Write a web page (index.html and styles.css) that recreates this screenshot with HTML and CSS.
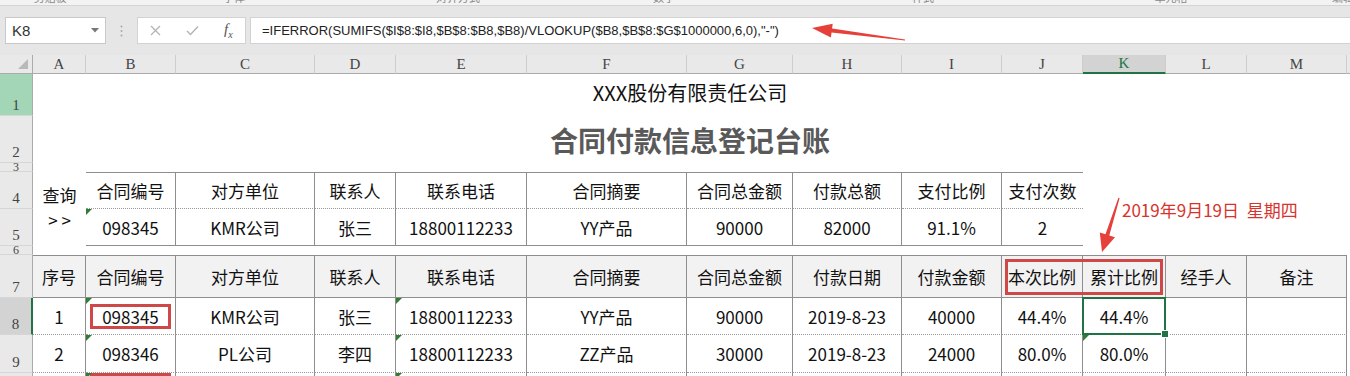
FILE: index.html
```html
<!DOCTYPE html>
<html lang="zh-CN">
<head>
    <meta charset="UTF-8">
    <title>合同付款信息登记台账</title>
    <link rel="stylesheet" href="styles.css">
</head>
<body>
    <div class="ribbon">
        <span>剪贴板</span><span>字体</span><span>对齐方式</span><span>数字</span><span>样式</span><span>单元格</span><span>编辑</span>
    </div>

    <div class="formula-bar">
        <div class="name-box">
            <span>K8</span>
            <svg width="8" height="5" viewBox="0 0 8 5"><path d="M0 0H8L4 4.5Z" fill="#777"/></svg>
        </div>
        <div class="fb-dots">
            <svg width="3" height="12" viewBox="0 0 3 12"><circle cx="1.5" cy="1.5" r="1" fill="#aaa"/><circle cx="1.5" cy="6" r="1" fill="#aaa"/><circle cx="1.5" cy="10.5" r="1" fill="#aaa"/></svg>
        </div>
        <div class="fb-buttons">
            <svg width="11" height="11" viewBox="0 0 11 11"><path d="M1 1L10 10M10 1L1 10" stroke="#b4b4b4" stroke-width="1.3"/></svg>
            <svg width="13" height="11" viewBox="0 0 13 11"><path d="M1 6L4.5 9.5L12 1.5" stroke="#b4b4b4" stroke-width="1.4" fill="none"/></svg>
            <span class="fx"><i>f</i><sub>x</sub></span>
        </div>
        <div class="fb-input">=IFERROR(SUMIFS($I$8:$I8,$B$8:$B8,$B8)/VLOOKUP($B8,$B$8:$G$1000000,6,0),"-")</div>
    </div>

    <div class="sheet">
        <!-- column headers -->
        <div class="corner"></div>
        <div class="ch">A</div><div class="ch">B</div><div class="ch">C</div><div class="ch">D</div>
        <div class="ch">E</div><div class="ch">F</div><div class="ch">G</div><div class="ch">H</div>
        <div class="ch">I</div><div class="ch">J</div><div class="ch sel">K</div><div class="ch">L</div>
        <div class="ch">M</div><div class="ch end"></div>

        <!-- row 1, 2 -->
        <div class="rh hl">1</div>
        <div class="c company span13">XXX股份有限责任公司</div>
        <div class="c"></div>
        <div class="rh">2</div>
        <div class="c title span13">合同付款信息登记台账</div>
        <div class="c"></div>

        <div class="rh thin">3</div>
        <div class="c span14"></div>

        <!-- query block -->
        <div class="rh">4</div>
        <div class="c ask"><span>查询</span><span>&gt; &gt;</span></div>
        <div class="c q qh">合同编号</div>
        <div class="c q qh">对方单位</div>
        <div class="c q qh">联系人</div>
        <div class="c q qh">联系电话</div>
        <div class="c q qh">合同摘要</div>
        <div class="c q qh">合同总金额</div>
        <div class="c q qh">付款总额</div>
        <div class="c q qh">支付比例</div>
        <div class="c q qh last">支付次数</div>
        <div class="c span4"></div>

        <div class="rh">5</div>
        <div class="c q qd num">098345</div>
        <div class="c q qd">KMR公司</div>
        <div class="c q qd">张三</div>
        <div class="c q qd">18800112233</div>
        <div class="c q qd">YY产品</div>
        <div class="c q qd">90000</div>
        <div class="c q qd">82000</div>
        <div class="c q qd">91.1%</div>
        <div class="c q qd last">2</div>
        <div class="c span4"></div>

        <div class="rh thin">6</div>
        <div class="c span14"></div>

        <!-- register -->
        <div class="rh">7</div>
        <div class="c th">序号</div>
        <div class="c th">合同编号</div>
        <div class="c th">对方单位</div>
        <div class="c th">联系人</div>
        <div class="c th">联系电话</div>
        <div class="c th">合同摘要</div>
        <div class="c th">合同总金额</div>
        <div class="c th">付款日期</div>
        <div class="c th">付款金额</div>
        <div class="c th">本次比例<span class="redbox"></span></div>
        <div class="c th">累计比例</div>
        <div class="c th">经手人</div>
        <div class="c th">备注</div>
        <div class="c"></div>

        <div class="rh sel">8</div>
        <div class="c td">1</div>
        <div class="c td num"><span class="mark">098345</span></div>
        <div class="c td">KMR公司</div>
        <div class="c td">张三</div>
        <div class="c td num">18800112233</div>
        <div class="c td">YY产品</div>
        <div class="c td">90000</div>
        <div class="c td">2019-8-23</div>
        <div class="c td">40000</div>
        <div class="c td">44.4%</div>
        <div class="c td active">44.4%</div>
        <div class="c td"></div>
        <div class="c td"></div>
        <div class="c"></div>

        <div class="rh">9</div>
        <div class="c td">2</div>
        <div class="c td num">098346</div>
        <div class="c td">PL公司</div>
        <div class="c td">李四</div>
        <div class="c td num">18800112233</div>
        <div class="c td">ZZ产品</div>
        <div class="c td">30000</div>
        <div class="c td">2019-8-23</div>
        <div class="c td">24000</div>
        <div class="c td">80.0%</div>
        <div class="c td num">80.0%</div>
        <div class="c td"></div>
        <div class="c td"></div>
        <div class="c"></div>

        <div class="rh">10</div>
        <div class="c td">3</div>
        <div class="c td num top"><span class="mark">098347</span></div>
        <div class="c td"></div>
        <div class="c td"></div>
        <div class="c td num"></div>
        <div class="c td"></div>
        <div class="c td"></div>
        <div class="c td"></div>
        <div class="c td"></div>
        <div class="c td"></div>
        <div class="c td"></div>
        <div class="c td"></div>
        <div class="c td"></div>
        <div class="c"></div>
    </div>

    <!-- annotations drawn over the sheet -->
    <svg class="arrow-formula" width="110" height="30" viewBox="0 0 110 30">
        <polygon points="12,13 32.7,8.7 32.1,13.6 105,24.5 105,25.5 31.5,17.6 30.9,22.5" fill="#e5403a"/>
    </svg>
    <svg class="arrow-date" width="40" height="70" viewBox="0 0 40 70">
        <polygon points="12,62 9.8,42.4 15.5,44.2 28.4,7.8 29.6,8.2 19.3,45.4 25,47.2" fill="#e5403a"/>
    </svg>
    <div class="note">2019年9月19日&nbsp; 星期四</div>
</body>
</html>
```

FILE: styles.css
```css
* {
    box-sizing: border-box;
}

body {
    margin: 0;
    width: 1350px;
    height: 376px;
    overflow: hidden;
    position: relative;
    background-color: #e6e6e6;
    font-family: "Noto Sans CJK SC", sans-serif;
    color: #111;
}

/* ribbon bottom edge */
.ribbon {
    height: 6px;
    background-color: #f3f3f3;
    border-bottom: 1px solid #d4d4d4;
    display: grid;
    grid-template-columns: 100px 268px 180px 232px 286px 210px 134px;
    overflow: hidden;
}

.ribbon span {
    text-align: center;
    font-size: 11px;
    line-height: 11px;
    margin-top: -8px;
    color: #888;
}

/* formula bar */
.formula-bar {
    display: flex;
    height: 27px;
    margin-top: 11px;
    padding-left: 5px;
}

.name-box {
    width: 101px;
    background-color: #fff;
    border: 1px solid #c8c8c8;
    display: flex;
    align-items: center;
    justify-content: space-between;
    padding: 0 6px 0 6px;
    font-family: "Liberation Sans", sans-serif;
    font-size: 15px;
    color: #333;
}

.fb-dots {
    width: 31px;
    display: flex;
    align-items: center;
    justify-content: center;
}

.fb-buttons {
    width: 109px;
    background-color: #fff;
    border: 1px solid #d2d2d2;
    display: flex;
    align-items: center;
    justify-content: space-around;
}

.fx {
    font-family: "Liberation Serif", serif;
    font-size: 15px;
    color: #555;
}

.fx sub {
    font-size: 10px;
    font-style: italic;
}

.fb-input {
    flex: 1;
    margin-left: 4px;
    background-color: #fff;
    border: 1px solid #d2d2d2;
    border-right: none;
    padding-left: 11px;
    font-family: "Liberation Sans", sans-serif;
    font-size: 13px;
    line-height: 25px;
    color: #222;
    white-space: nowrap;
}

/* worksheet */
.sheet {
    margin-top: 11px;
    display: grid;
    grid-template-columns: 33px 53px 90px 139px 81px 131px 160px 106px 109px 100px 81px 83px 81px 100px 1fr;
    grid-template-rows: 19px 42px 47px 9px 37px 37px 9px 43px 37px 38px 30px;
    background-color: #fff;
}

.corner {
    background-color: #e9e9e9;
    border-right: 1px solid #ababab;
    border-bottom: 1px solid #ababab;
    position: relative;
}

.corner::after {
    content: "";
    position: absolute;
    right: 4px;
    bottom: 4px;
    border-left: 10px solid transparent;
    border-bottom: 10px solid #b9b9b9;
}

.ch {
    background-color: #e9e9e9;
    border-right: 1px solid #cdcdcd;
    border-bottom: 1px solid #ababab;
    display: flex;
    align-items: flex-end;
    justify-content: center;
    font-family: "Liberation Serif", serif;
    font-size: 15px;
    line-height: 17px;
    color: #444;
}

.ch.end {
    border-right: none;
}

.ch.sel {
    background-color: #d3d3d3;
    border-bottom: 2px solid #217346;
    color: #217346;
}

.rh {
    background-color: #e9e9e9;
    border-right: 1px solid #ababab;
    border-bottom: 1px solid #d6d6d6;
    display: flex;
    align-items: flex-end;
    justify-content: center;
    font-family: "Liberation Serif", serif;
    font-size: 15px;
    line-height: 15px;
    padding-bottom: 2px;
    color: #444;
    overflow: hidden;
}

.rh.thin {
    font-size: 12px;
    line-height: 8px;
    padding-bottom: 0;
}

.rh.hl {
    background-color: #a2d6b7;
}

.rh.sel {
    background-color: #d3d3d3;
    border-right: 2px solid #217346;
}

.c {
    display: flex;
    align-items: center;
    justify-content: center;
    font-size: 17px;
    white-space: nowrap;
    position: relative;
}

.span13 {
    grid-column: span 13;
}

.span14 {
    grid-column: span 14;
}

.span4 {
    grid-column: span 4;
}

.company {
    font-size: 20px;
    color: #111;
    padding-bottom: 5px;
}

.title {
    font-size: 28px;
    font-weight: bold;
    color: #595959;
}

.ask {
    grid-row: span 2;
    flex-direction: column;
    line-height: 25px;
    padding-bottom: 4px;
}

/* query block */
.q {
    border-right: 1px solid #8e8e8e;
}

.q.last {
    border-right: none;
}

.qh {
    border-top: 1px solid #8e8e8e;
    border-bottom: 1px dotted #9a9a9a;
}

.qd {
    border-bottom: 1px solid #8e8e8e;
}

/* register table */
.th {
    background-color: #f2f2f2;
    border-top: 1px solid #8e8e8e;
    border-bottom: 1px solid #8e8e8e;
    border-right: 1px solid #8e8e8e;
}

.td {
    border-bottom: 1px dotted #9a9a9a;
    border-right: 1px solid #8e8e8e;
}

.td.top {
    align-items: flex-start;
}

/* number stored as text marker */
.num::before {
    content: "";
    position: absolute;
    top: 0;
    left: 0;
    border-top: 6px solid #2e7d32;
    border-right: 6px solid transparent;
}

.mark {
    border: 3px solid #cf4848;
    padding: 0 9px;
    line-height: 19px;
}

.redbox {
    position: absolute;
    left: 3px;
    top: 3px;
    width: 158px;
    height: 36px;
    border: 3px solid #cf4848;
    z-index: 2;
}

.active::after {
    content: "";
    position: absolute;
    top: -1px;
    left: -1px;
    right: -1px;
    bottom: -1px;
    border: 2px solid #217346;
}

.active::before {
    content: "";
    position: absolute;
    right: -4px;
    bottom: -4px;
    width: 6px;
    height: 6px;
    background-color: #217346;
    border: 1px solid #fff;
    z-index: 1;
}

/* annotations */
.arrow-formula {
    position: absolute;
    left: 800px;
    top: 15px;
}

.arrow-date {
    position: absolute;
    left: 1090px;
    top: 190px;
}

.note {
    position: absolute;
    left: 1122px;
    top: 198px;
    font-size: 17px;
    line-height: 24px;
    color: #d8322c;
    white-space: nowrap;
}
```
